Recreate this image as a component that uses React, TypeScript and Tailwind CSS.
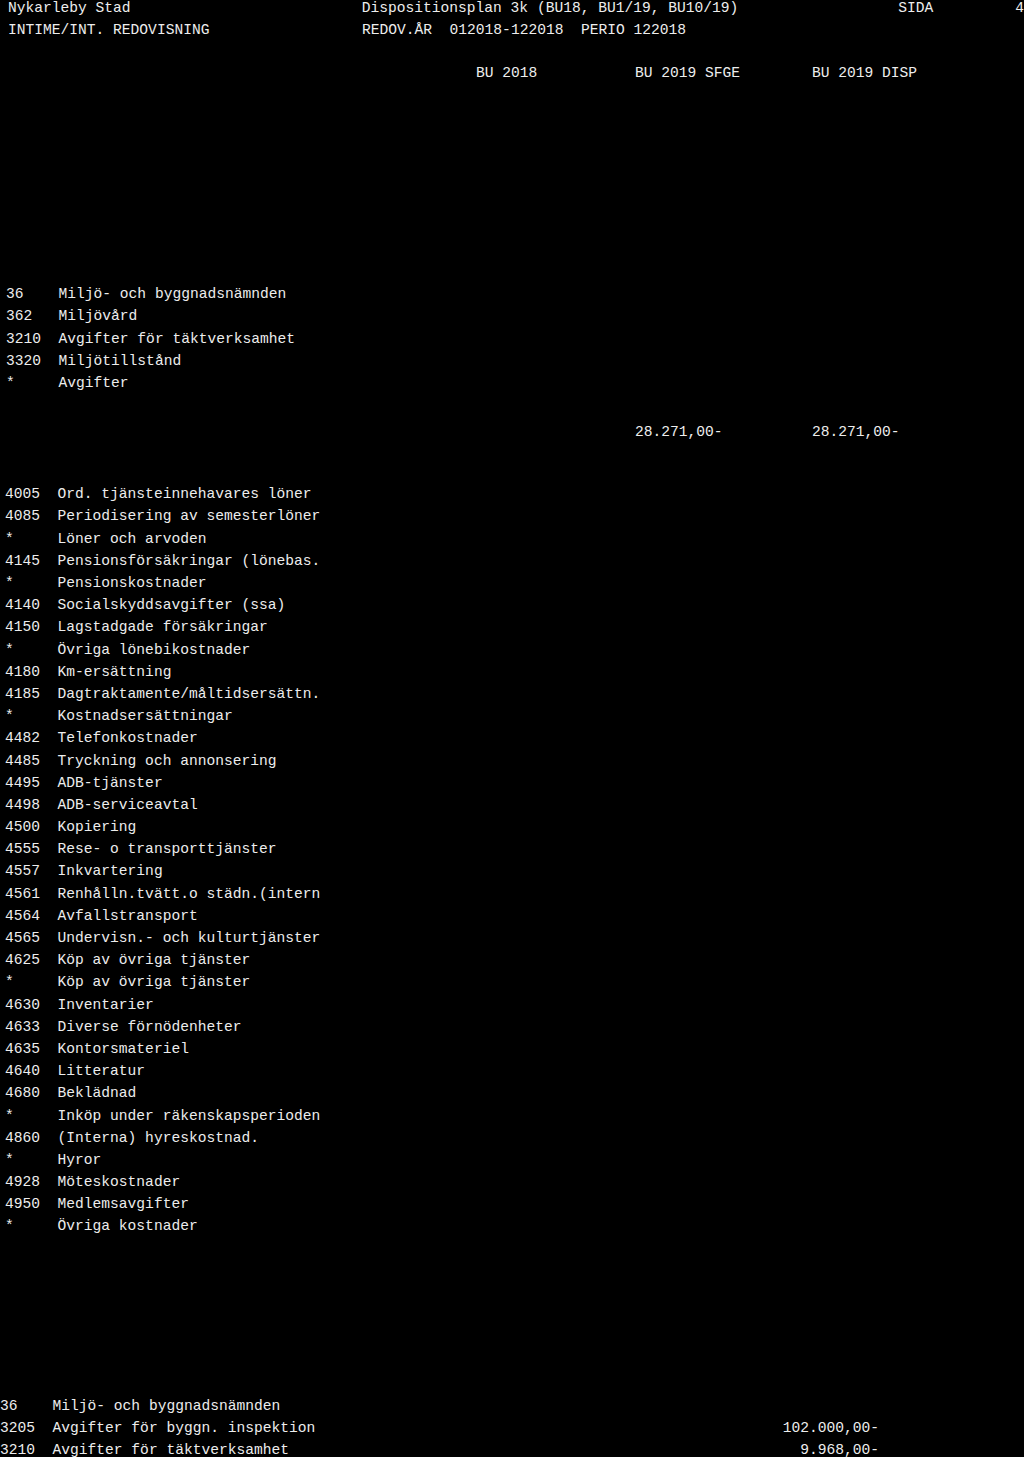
const section1 = [
  "36    Miljö- och byggnadsnämnden",
  "362   Miljövård",
  "3210  Avgifter för täktverksamhet",
  "3320  Miljötillstånd",
  "*     Avgifter",
];

const section2 = [
  "4005  Ord. tjänsteinnehavares löner",
  "4085  Periodisering av semesterlöner",
  "*     Löner och arvoden",
  "4145  Pensionsförsäkringar (lönebas.",
  "*     Pensionskostnader",
  "4140  Socialskyddsavgifter (ssa)",
  "4150  Lagstadgade försäkringar",
  "*     Övriga lönebikostnader",
  "4180  Km-ersättning",
  "4185  Dagtraktamente/måltidsersättn.",
  "*     Kostnadsersättningar",
  "4482  Telefonkostnader",
  "4485  Tryckning och annonsering",
  "4495  ADB-tjänster",
  "4498  ADB-serviceavtal",
  "4500  Kopiering",
  "4555  Rese- o transporttjänster",
  "4557  Inkvartering",
  "4561  Renhålln.tvätt.o städn.(intern",
  "4564  Avfallstransport",
  "4565  Undervisn.- och kulturtjänster",
  "4625  Köp av övriga tjänster",
  "*     Köp av övriga tjänster",
  "4630  Inventarier",
  "4633  Diverse förnödenheter",
  "4635  Kontorsmateriel",
  "4640  Litteratur",
  "4680  Beklädnad",
  "*     Inköp under räkenskapsperioden",
  "4860  (Interna) hyreskostnad.",
  "*     Hyror",
  "4928  Möteskostnader",
  "4950  Medlemsavgifter",
  "*     Övriga kostnader",
];

const section3 = [
  { label: "36    Miljö- och byggnadsnämnden", amount: "" },
  { label: "3205  Avgifter för byggn. inspektion", amount: "102.000,00-" },
  { label: "3210  Avgifter för täktverksamhet", amount: "9.968,00-" },
];

export default function App() {
  return (
    <div className="w-[1024px] h-[1457px] overflow-hidden bg-black text-[#ededed] font-['Liberation_Mono',monospace] text-[14.6px] whitespace-pre">
      {/* sidhuvud */}
      <div className="-mt-[3px] leading-[22px]">
        <div className="flex">
          <div className="w-[362px] pl-[8px]">Nykarleby Stad</div>
          <div className="w-[537px]">Dispositionsplan 3k (BU18, BU1/19, BU10/19)</div>
          <div className="w-[117px]">SIDA</div>
          <div>4</div>
        </div>
        <div className="flex">
          <div className="w-[362px] pl-[8px]">INTIME/INT. REDOVISNING</div>
          <div>REDOV.ÅR  012018-122018  PERIO 122018</div>
        </div>
      </div>

      <div className="mt-[21px] flex pl-[476px] leading-[22px]">
        <div className="w-[159px]">BU 2018</div>
        <div className="w-[177px]">BU 2019 SFGE</div>
        <div>BU 2019 DISP</div>
      </div>

      {/* intäkter */}
      <div className="mt-[199px] pl-[6px] leading-[22.25px]">
        {section1.map((row, i) => (
          <div key={i}>{row}</div>
        ))}
      </div>

      <div className="mt-[27px] flex pl-[635px] leading-[22px]">
        <div className="w-[177px]">28.271,00-</div>
        <div>28.271,00-</div>
      </div>

      {/* kostnader */}
      <div className="mt-[40px] pl-[5px] leading-[22.18px]">
        {section2.map((row, i) => (
          <div key={i}>{row}</div>
        ))}
      </div>

      <div className="mt-[157px] leading-[22px]">
        {section3.map((row, i) => (
          <div key={i} className="flex w-[879px]">
            <div className="flex-1">{row.label}</div>
            <div className="text-right">{row.amount}</div>
          </div>
        ))}
      </div>
    </div>
  );
}
